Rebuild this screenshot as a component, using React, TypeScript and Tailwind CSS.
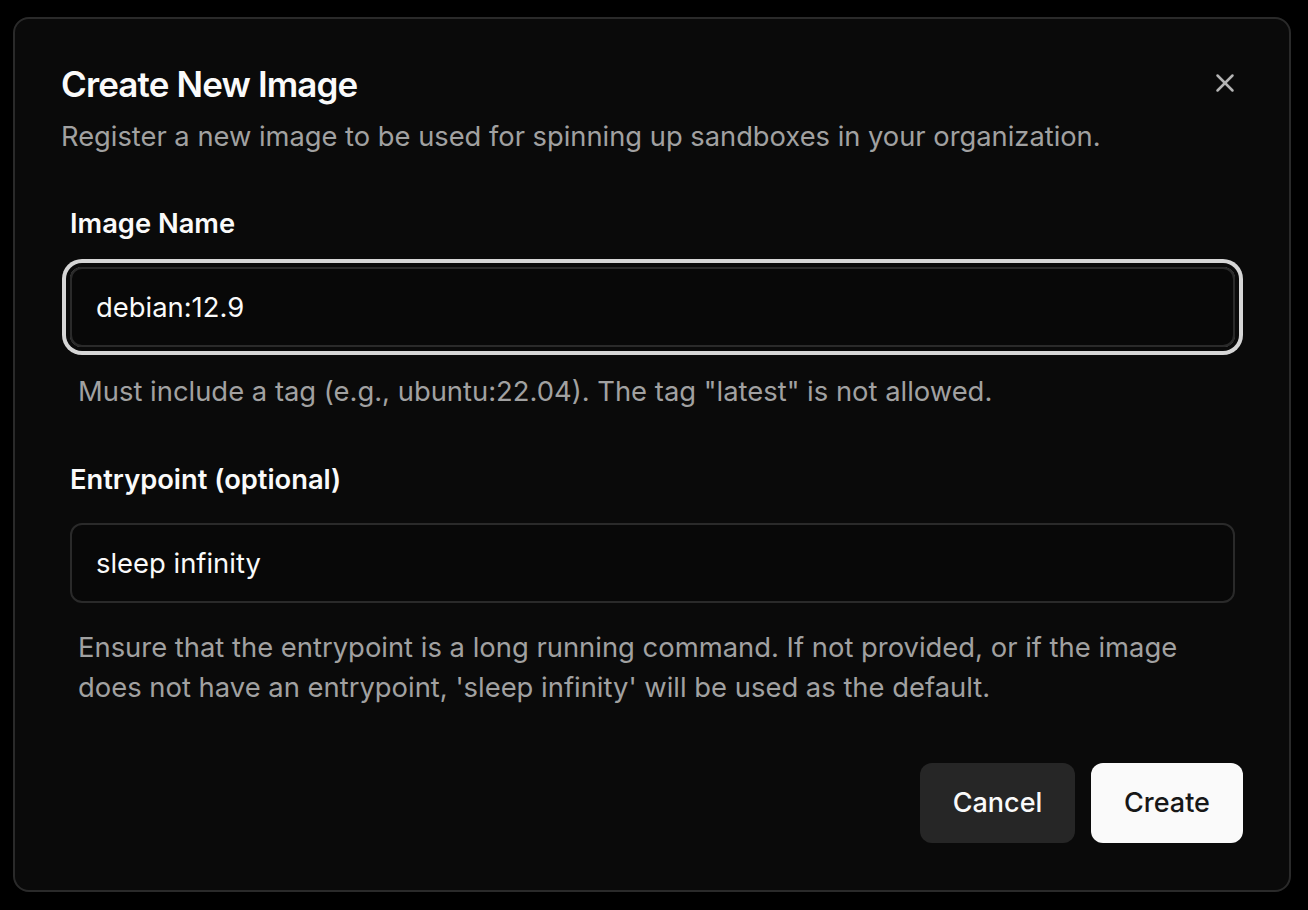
import { X } from 'lucide-react';

export default function App() {
  return (
    <div
      className="min-h-[910px] w-[1308px] bg-black pt-[17px] pl-[13px]"
      style={{ fontFamily: 'Inter, "Noto Sans", sans-serif' }}
    >
      <div className="relative w-[1278px] rounded-[16px] border-2 border-[#2a2a2a] bg-[#0a0a0a] px-[46px] pt-[47px] pb-[47px]">
        <button className="absolute right-[48px] top-[48px] flex h-8 w-8 items-center justify-center text-[#b5b5b5]">
          <X size={30} strokeWidth={2} />
        </button>

        {/* Header */}
        <div className="flex flex-col gap-[15px]">
          <h2 className="mt-[1px] text-[35px] font-semibold leading-none tracking-tight text-[#fafafa]">
            Create New Image
          </h2>
          <p className="text-[27.3px] leading-[40px] text-[#a1a1a1]">
            Register a new image to be used for spinning up sandboxes in your organization.
          </p>
        </div>

        {/* Form */}
        <div className="mt-[53px] pl-[9px] pr-[8px]">
          <label className="block text-[27.3px] font-semibold leading-[28px] text-[#fafafa]">Image Name</label>
          <div className="mt-[29px] rounded-[12px] ring-4 ring-[#d6d6d6] ring-offset-4 ring-offset-[#0a0a0a]">
            <input
              defaultValue="debian:12.9"
              className="h-[80px] w-full rounded-[12px] border-2 border-[#2a2a2a] bg-[#080808] px-[24px] text-[27.4px] text-[#fafafa] outline-none"
            />
          </div>
          <p className="mt-[24px] px-[8px] text-[27.4px] leading-[40px] text-[#a1a1a1]">
            Must include a tag (e.g., ubuntu:22.04). The tag "latest" is not allowed.
          </p>

          <label className="mt-[55px] block text-[27.3px] font-semibold leading-[28px] text-[#fafafa]">
            Entrypoint (optional)
          </label>
          <input
            defaultValue="sleep infinity"
            className="mt-[29px] h-[80px] w-full rounded-[12px] border-2 border-[#2a2a2a] bg-[#080808] px-[24px] text-[27.4px] text-[#fafafa] outline-none"
          />
          <p className="mt-[24px] px-[8px] text-[27.4px] leading-[40px] text-[#a1a1a1]">
            Ensure that the entrypoint is a long running command. If not provided, or if the image does not have
            an entrypoint, 'sleep infinity' will be used as the default.
          </p>
        </div>

        {/* Footer */}
        <div className="mt-[56px] flex justify-end gap-[16px]">
          <button className="h-[80px] w-[155px] rounded-[12px] bg-[#262626] text-[27px] font-medium text-[#fafafa]">
            Cancel
          </button>
          <button className="h-[80px] w-[152px] rounded-[12px] bg-[#fafafa] text-[27px] font-medium text-[#171717]">
            Create
          </button>
        </div>
      </div>
    </div>
  );
}
